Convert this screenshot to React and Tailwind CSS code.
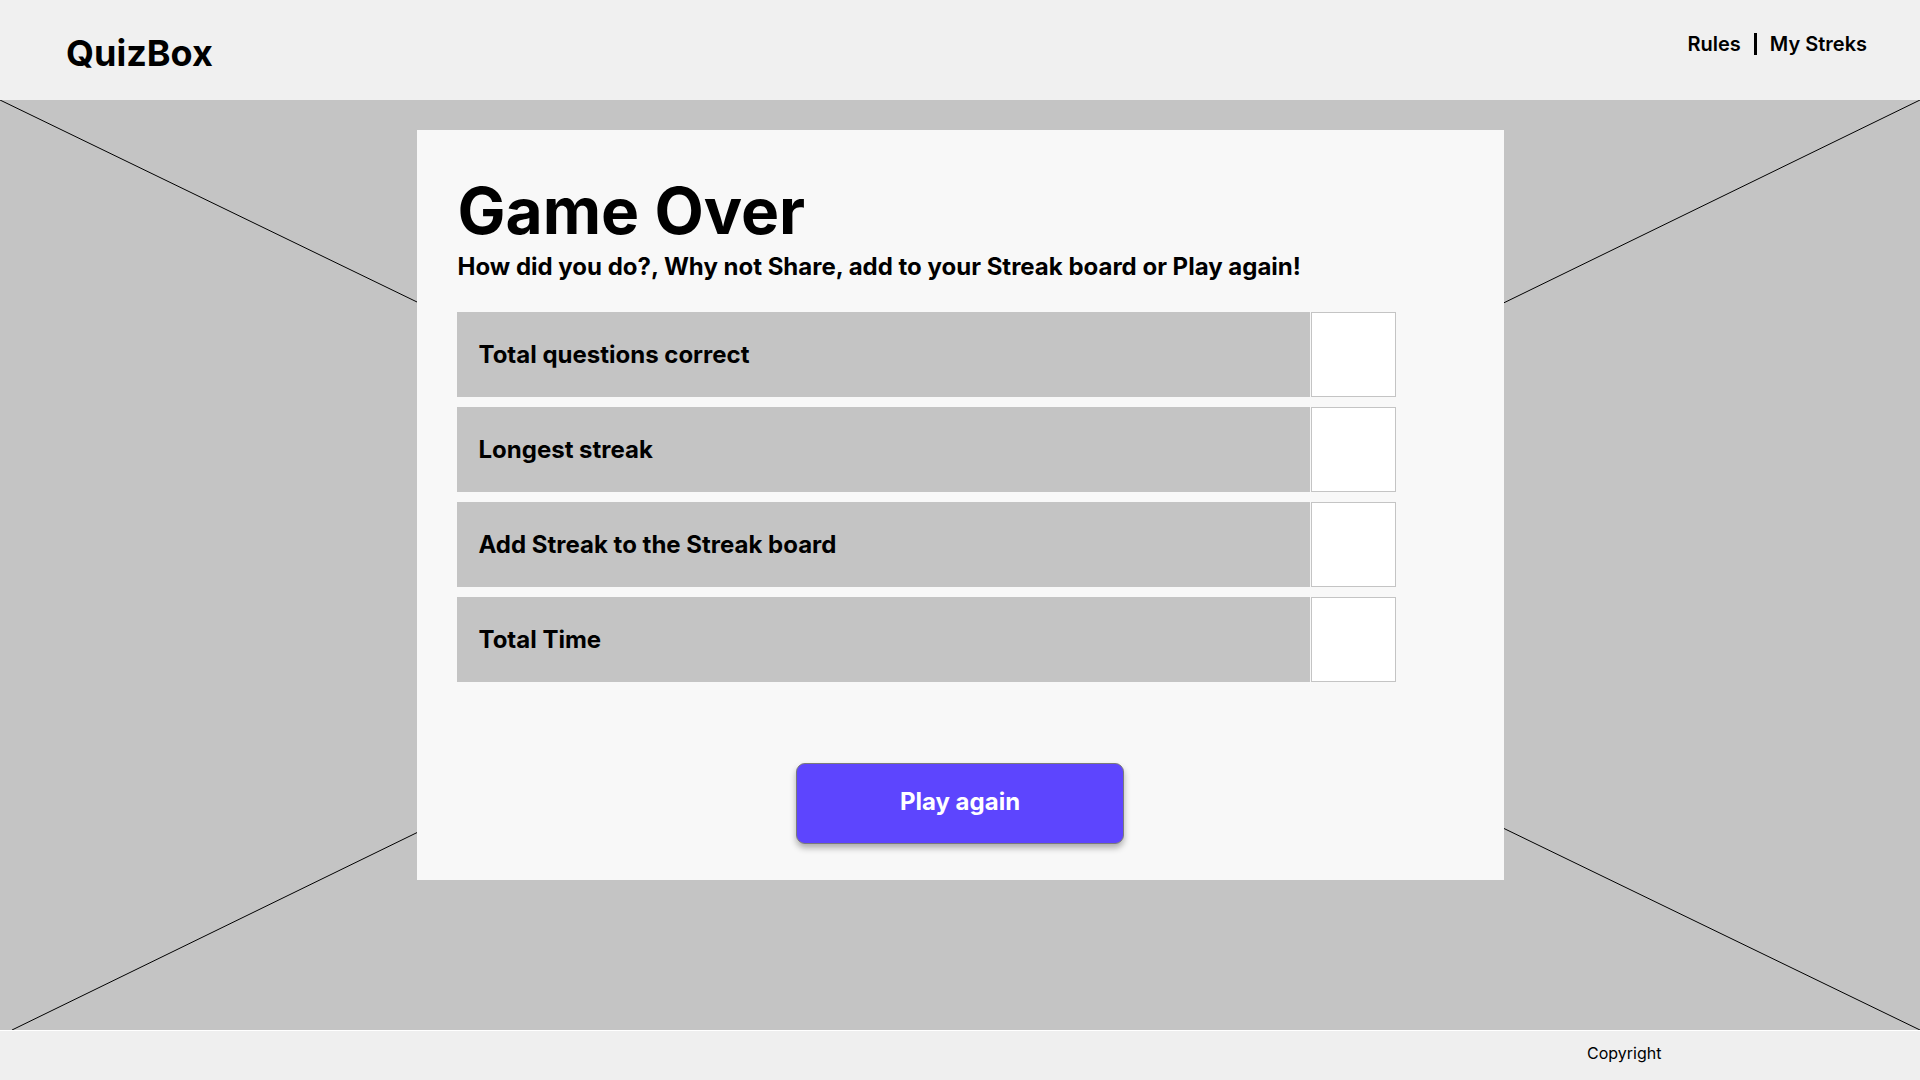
import React from 'react'

const stats = [
  'Total questions correct',
  'Longest streak',
  'Add Streak to the Streak board',
  'Total Time',
]

const StatRow = ({ label }) => {
  return (
    <div className="flex h-[85px] w-[939px]">
      <div className="flex flex-1 items-center bg-[#c4c4c4] pl-[22px] text-[24px] font-bold text-black">
        {label}
      </div>
      <div className="ml-px h-[85px] w-[85px] border border-[#c4c4c4] bg-white"></div>
    </div>
  )
}

const App = () => {
  return (
    <div className="flex h-[1080px] w-[1920px] flex-col font-['Inter',sans-serif] text-black">
      <header className="flex h-[100px] justify-between bg-[#f0f0f0] pl-[66px] pr-[53px]">
        <div className="pt-[33px] text-[36px] font-bold leading-[40px]">QuizBox</div>
        <nav className="flex items-center gap-[13px] self-start pt-[32px] text-[20px] font-semibold leading-[24px]">
          <a href="#">Rules</a>
          <span className="h-[22px] w-[3px] bg-black"></span>
          <a href="#">My Streks</a>
        </nav>
      </header>

      <main className="relative flex-1 bg-[#c4c4c4]">
        <svg
          className="absolute inset-0 h-full w-full"
          viewBox="0 0 1920 930"
          preserveAspectRatio="none"
        >
          <line x1="0" y1="0" x2="1920" y2="930" stroke="#000" strokeWidth="1" />
          <line x1="1920" y1="0" x2="12" y2="930" stroke="#000" strokeWidth="1" />
        </svg>

        <div className="relative mx-auto mt-[30px] flex h-[750px] w-[1087px] flex-col bg-[#f8f8f8] pl-[41px] pt-[49px]">
          <h1 className="text-[64px] font-bold leading-[64px]">Game Over</h1>
          <p className="mt-[10px] text-[24px] font-bold leading-[28px]">
            How did you do?, Why not Share, add to your Streak board or Play again!
          </p>

          <div className="mt-[31px] -ml-px flex flex-col gap-[10px]">
            {stats.map((s) => (
              <StatRow key={s} label={s} />
            ))}
          </div>

          <div className="mt-[81px] flex justify-center pr-[41px]">
            <button className="h-[81px] w-[328px] rounded-[9px] border border-[#7a7a7a] bg-[#5d45fe] pb-[4px] text-[24px] font-bold text-white shadow-[0_4px_6px_rgba(0,0,0,0.3)]">
              Play again
            </button>
          </div>
        </div>
      </main>

      <footer className="flex h-[50px] items-center border-t border-white bg-[#efefef] pb-[5px] pl-[1587px] text-[16px]">
        Copyright
      </footer>
    </div>
  )
}

export default App
